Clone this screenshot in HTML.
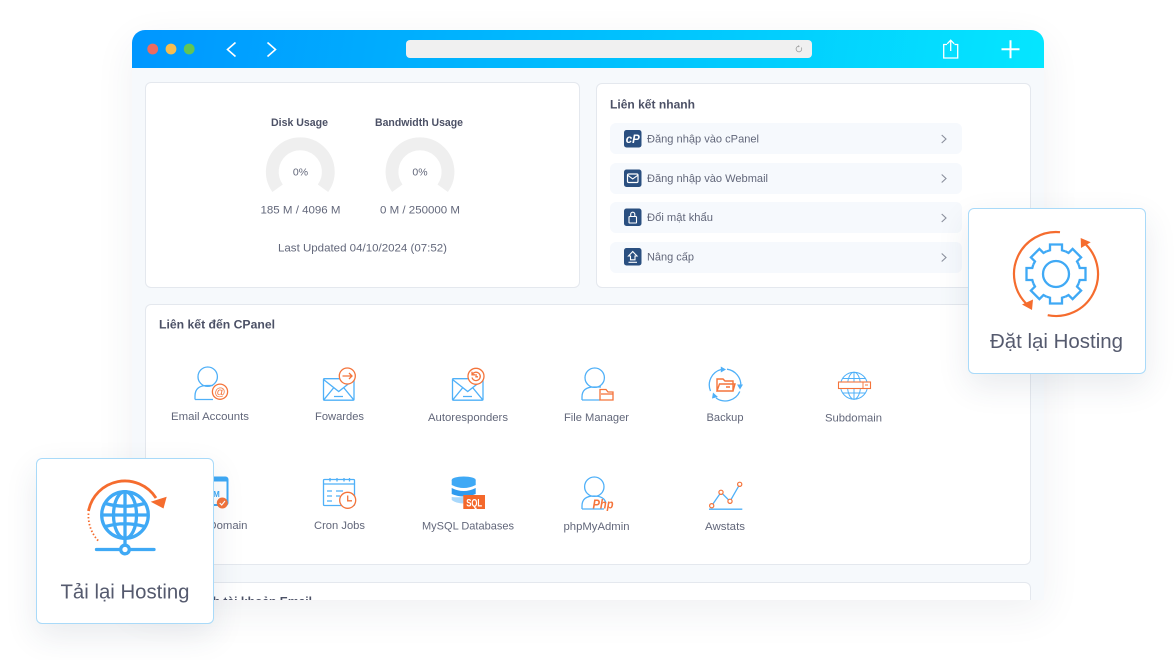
<!DOCTYPE html>
<html lang="vi">
<head>
<meta charset="utf-8">
<title>Hosting</title>
<style>
html,body{margin:0;padding:0;background:#fff;}
body{width:1176px;height:660px;position:relative;overflow:hidden;font-family:"Liberation Sans",sans-serif;}
.browser{position:absolute;left:132px;top:30px;width:912px;height:570px;background:#f6f9fc;border-radius:13px 13px 0 0;overflow:hidden;}
.shadow{position:absolute;left:132px;top:30px;width:912px;height:570px;border-radius:13px 13px 0 0;box-shadow:0 12px 40px rgba(40,60,90,.07);}
.head{position:absolute;left:0;top:0;width:912px;height:38px;background:linear-gradient(100deg,#0096ff 0%,#00befe 50%,#05e6ff 100%);}
.card{position:absolute;background:#fff;border:1px solid #e4e8ee;border-radius:6px;box-sizing:border-box;}
.row{position:absolute;left:478px;width:352px;height:31px;background:#f6f9fd;border-radius:6px;}
.float{position:absolute;width:178px;height:166px;background:#fff;border:1px solid #a9daf9;border-radius:6px;box-sizing:border-box;box-shadow:0 12px 32px rgba(40,60,90,.10);}
svg{position:absolute;left:0;top:0;overflow:visible;filter:blur(.3px);}
text{font-family:"Liberation Sans",sans-serif;fill:#555a6e;}
.b{font-weight:700;fill:#4c5166;font-size:12px;}
.s{font-size:11px;fill:#62677a;}
.l{fill:none;stroke:#4fb0f8;stroke-width:1.3;}
.o{fill:none;stroke:#f4743b;stroke-width:1.3;}
</style>
</head>
<body>
<div class="shadow"></div>
<div class="browser">
  <div class="head"></div>
  <div class="card" style="left:13px;top:52px;width:435px;height:206px;"></div>
  <div class="card" style="left:464px;top:53px;width:435px;height:205px;"></div>
  <div class="row" style="top:93px;"></div>
  <div class="row" style="top:133px;"></div>
  <div class="row" style="top:172px;"></div>
  <div class="row" style="top:212px;"></div>
  <div class="card" style="left:13px;top:274px;width:886px;height:261px;"></div>
  <div class="card" style="left:13px;top:552px;width:886px;height:60px;"></div>

  <svg width="1176" height="660" viewBox="0 0 1176 660" style="left:-132px;top:-30px;">
    <!-- window controls -->
    <circle cx="152.7" cy="49" r="5.4" fill="#ee6b60"/>
    <circle cx="171" cy="49" r="5.4" fill="#f6bd4f"/>
    <circle cx="189.2" cy="49" r="5.4" fill="#62c555"/>
    <path d="M235.5 42.5L227.5 49.5L235.5 56.5" fill="none" stroke="#fff" stroke-width="1.6"/>
    <path d="M267.5 42.5L275.5 49.5L267.5 56.5" fill="none" stroke="#fff" stroke-width="1.6"/>
    <rect x="406" y="40" width="406" height="18" rx="4" fill="#f0f0f0"/>
    <path d="M801.3 47.5A2.8 2.8 0 1 1 798.8 46.2" fill="none" stroke="#a0a0a0" stroke-width=".8"/>
    <path d="M798.3 45l1.5 1.2-1.5 1.2z" fill="#a0a0a0"/>
    <path d="M947 44.5H943.7V58H957.7V44.5H954.5M950.7 51V40.5M947.2 43.8L950.7 40.2L954.2 43.8" fill="none" stroke="#fff" stroke-width="1.3"/>
    <path d="M1001.5 49.3H1019.5M1010.5 40.3V58.3" stroke="#fff" stroke-width="2" fill="none"/>

    <!-- usage -->
    <text class="b" x="299.5" y="126" text-anchor="middle" textLength="57" lengthAdjust="spacingAndGlyphs" style="font-size:11px">Disk Usage</text>
    <text class="b" x="419" y="126" text-anchor="middle" textLength="88" lengthAdjust="spacingAndGlyphs" style="font-size:11px">Bandwidth Usage</text>
    <path d="M277.6 188.2A28 28 0 1 1 323 188.2" fill="none" stroke="#efefef" stroke-width="12.8"/>
    <path d="M397.3 188.2A28 28 0 1 1 442.7 188.2" fill="none" stroke="#efefef" stroke-width="12.8"/>
    <text class="s" x="300.5" y="175.5" text-anchor="middle" style="font-size:10.5px">0%</text>
    <text class="s" x="420" y="175.5" text-anchor="middle" style="font-size:10.5px">0%</text>
    <text class="s" x="300.5" y="213.5" text-anchor="middle" textLength="80" lengthAdjust="spacingAndGlyphs">185 M / 4096 M</text>
    <text class="s" x="420" y="213.5" text-anchor="middle" textLength="80" lengthAdjust="spacingAndGlyphs">0 M / 250000 M</text>
    <text class="s" x="362.5" y="251.5" text-anchor="middle" textLength="169" lengthAdjust="spacingAndGlyphs">Last Updated 04/10/2024 (07:52)</text>

    <!-- quick links -->
    <text class="b" x="610" y="108.5" textLength="85" lengthAdjust="spacingAndGlyphs">Liên kết nhanh</text>
    <rect x="624" y="130" width="17.5" height="17.5" rx="2.5" fill="#2a4f80"/>
    <rect x="624" y="169.5" width="17.5" height="17.5" rx="2.5" fill="#2a4f80"/>
    <rect x="624" y="208.5" width="17.5" height="17.5" rx="2.5" fill="#2a4f80"/>
    <rect x="624" y="248" width="17.5" height="17.5" rx="2.5" fill="#2a4f80"/>
    <text x="632.8" y="142.8" text-anchor="middle" textLength="14" lengthAdjust="spacingAndGlyphs" style="font-size:11.5px;font-weight:700;font-style:italic;fill:#fff">cP</text>
    <rect x="627.5" y="174" width="10.5" height="8.5" rx="1.2" fill="none" stroke="#fff" stroke-width="1.2"/>
    <path d="M627.8 175.3L632.7 179L637.7 175.3" fill="none" stroke="#fff" stroke-width="1.1"/>
    <rect x="629" y="216.5" width="7.5" height="6.5" rx=".8" fill="none" stroke="#fff" stroke-width="1.1"/>
    <path d="M630.7 216.5V214.2A2 2 0 0 1 634.8 214.2V216.5" fill="none" stroke="#fff" stroke-width="1.1"/>
    <path d="M632.7 251.5L637 256H635V259.8H630.5V256H628.5Z" fill="none" stroke="#fff" stroke-width="1.1"/>
    <path d="M628.5 262.3H637" stroke="#fff" stroke-width="1.1"/>
    <text class="s" x="647" y="142.5" textLength="112" lengthAdjust="spacingAndGlyphs">Đăng nhập vào cPanel</text>
    <text class="s" x="647" y="182" textLength="121" lengthAdjust="spacingAndGlyphs">Đăng nhập vào Webmail</text>
    <text class="s" x="647" y="221" textLength="66" lengthAdjust="spacingAndGlyphs">Đổi mật khẩu</text>
    <text class="s" x="647" y="260.5" textLength="47" lengthAdjust="spacingAndGlyphs">Nâng cấp</text>
    <g fill="none" stroke="#8a8f9c" stroke-width="1.1">
      <path d="M941.7 135L946 139L941.7 143"/>
      <path d="M941.7 174.5L946 178.5L941.7 182.5"/>
      <path d="M941.7 214L946 218L941.7 222"/>
      <path d="M941.7 253.5L946 257.5L941.7 261.5"/>
    </g>

    <!-- cPanel section -->
    <text class="b" x="159" y="328.5" textLength="116" lengthAdjust="spacingAndGlyphs">Liên kết đến CPanel</text>

    <!-- Email Accounts -->
    <circle class="l" cx="207.7" cy="376.7" r="9.7"/>
    <path class="l" d="M195 399.5V396Q195 385.5 207 385.5H213M195 399.5H213"/>
    <circle cx="220" cy="391.7" r="7.6" fill="#fff" stroke="#f4743b" stroke-width="1.3"/>
    <text x="220" y="395.5" text-anchor="middle" style="font-size:11px;fill:#f4743b">@</text>
    <text class="s" x="210" y="420" text-anchor="middle" textLength="78" lengthAdjust="spacingAndGlyphs">Email Accounts</text>

    <!-- Fowardes -->
    <rect class="l" x="323.5" y="378.7" width="30.5" height="21.5" rx="1"/>
    <path class="l" d="M323.5 379.5L338.7 391.5L354 379.5M323.8 399.8L333.5 388M353.7 399.8L344 388M334 396.5H343"/>
    <circle cx="347.3" cy="376" r="8" fill="#fff" stroke="#f4743b" stroke-width="1.3"/>
    <path class="o" d="M342.5 376H352M349 373L352 376L349 379"/>
    <text class="s" x="339.5" y="420" text-anchor="middle" textLength="49" lengthAdjust="spacingAndGlyphs">Fowardes</text>

    <!-- Autoresponders -->
    <rect class="l" x="452.5" y="378.7" width="30.5" height="21.5" rx="1"/>
    <path class="l" d="M452.5 379.5L467.7 391.5L483 379.5M452.8 399.8L462.5 388M482.7 399.8L473 388M463 396.5H472"/>
    <circle cx="476" cy="376.3" r="8" fill="#fff" stroke="#f4743b" stroke-width="1.3"/>
    <path class="o" d="M472.3 374.5A4.2 4.2 0 1 1 472 377.5M472 371.8V374.8H475M476 374V376.8H478"/>
    <text class="s" x="468" y="421" text-anchor="middle" textLength="80" lengthAdjust="spacingAndGlyphs">Autoresponders</text>

    <!-- File Manager -->
    <circle class="l" cx="594.7" cy="377.7" r="9.7"/>
    <path class="l" d="M582 400V397Q582 387 594 387H601M582 400H600"/>
    <path d="M600 400V389.5H606L608 392H613V400Z" fill="#fff" stroke="#f4743b" stroke-width="1.3"/>
    <path class="o" d="M601 394H613"/>
    <text class="s" x="596.5" y="421" text-anchor="middle" textLength="65" lengthAdjust="spacingAndGlyphs">File Manager</text>

    <!-- Backup -->
    <path class="l" d="M710.5 391A16 16 0 0 1 721 369.5M727 369.2A16 16 0 0 1 740.8 386M739.8 391.5A16 16 0 0 1 716 398"/>
    <path d="M720.8 366.5L726 369.5L720.8 372.5Z M737 384.5H743L740 389.5Z M713 392.5L712 398.5L718 397Z" fill="#4fb0f8"/>
    <path class="o" d="M717 391V379H723L725 381H733V391ZM717 391L719.5 384H735L733 391ZM726 387H730" style="stroke-width:1.4"/>
    <text class="s" x="725" y="421" text-anchor="middle" textLength="37" lengthAdjust="spacingAndGlyphs">Backup</text>

    <!-- Subdomain -->
    <circle class="l" cx="854" cy="385.7" r="13.5" style="stroke-width:1"/>
    <ellipse class="l" cx="854" cy="385.7" rx="6.5" ry="13.5" style="stroke-width:1"/>
    <path class="l" d="M854 372.2V399.2M842.5 378.5H865.5M842.5 393H865.5" style="stroke-width:1"/>
    <rect x="838.5" y="382" width="32" height="6.5" fill="#fff" stroke="#f4743b" stroke-width="1.1"/>
    <path class="o" d="M863 382V388.5M865 385H868" style="stroke-width:.9"/>
    <text class="s" x="853.5" y="421.5" text-anchor="middle" textLength="57" lengthAdjust="spacingAndGlyphs">Subdomain</text>

    <!-- Addon Domain -->
    <rect x="205" y="477.5" width="22.5" height="27.5" rx="2" fill="none" stroke="#3fa9f5" stroke-width="2"/>
    <rect x="205" y="477.5" width="22.5" height="4" fill="#3fa9f5"/>
    <text x="216.5" y="497" text-anchor="middle" style="font-size:8px;font-weight:700;fill:#3fa9f5">M</text>
    <circle cx="222.3" cy="503" r="5.5" fill="#f4743b"/>
    <path d="M219.7 503L221.7 505L225 501" fill="none" stroke="#fff" stroke-width="1.1"/>
    <text class="s" x="210" y="529" text-anchor="middle" textLength="75" lengthAdjust="spacingAndGlyphs">Addon Domain</text>

    <!-- Cron Jobs -->
    <rect class="l" x="323.5" y="479.5" width="31" height="26" rx="1"/>
    <path class="l" d="M323.5 484H354.5M330 478V481.5M337 478V481.5M344 478V481.5M349.5 478V481.5M327 491H332M336 491H343M327 496H332M336 496H340M327 501H332"/>
    <circle cx="347.7" cy="500.3" r="8" fill="#fff" stroke="#f4743b" stroke-width="1.3"/>
    <path class="o" d="M347.7 495.5V500.8H352"/>
    <text class="s" x="339.5" y="529" text-anchor="middle" textLength="51" lengthAdjust="spacingAndGlyphs">Cron Jobs</text>

    <!-- MySQL -->
    <path d="M451.7 480V485Q463.7 491 475.7 485V480Z" fill="#3fa9f5"/>
    <ellipse cx="463.7" cy="480" rx="12" ry="3.5" fill="#3fa9f5"/>
    <path d="M451.7 488V494Q463.7 499 475.7 494V488Q463.7 494 451.7 488Z" fill="#2f9bef"/>
    <path d="M451.7 497V500Q456 503.5 464 503.5V497Q457 497.5 451.7 497Z" fill="#a9d8fb"/>
    <rect x="463.3" y="495" width="21.7" height="14" fill="#f4682b"/>
    <text x="474.2" y="506.3" text-anchor="middle" textLength="16" lengthAdjust="spacingAndGlyphs" style="font-size:11px;font-weight:700;fill:#fff">SQL</text>
    <text class="s" x="468" y="529.5" text-anchor="middle" textLength="92" lengthAdjust="spacingAndGlyphs">MySQL Databases</text>

    <!-- phpMyAdmin -->
    <circle class="l" cx="594.3" cy="486.7" r="9.7"/>
    <path class="l" d="M582 509V506Q582 496 594 496Q604 496 606 503M582 509H604"/>
    <text x="592.5" y="508.5" textLength="21" lengthAdjust="spacingAndGlyphs" style="font-size:12.5px;font-weight:700;font-style:italic;fill:#f4743b">Php</text>
    <text class="s" x="596.5" y="530" text-anchor="middle" textLength="66" lengthAdjust="spacingAndGlyphs">phpMyAdmin</text>

    <!-- Awstats -->
    <path class="l" d="M709 509.2H742.3M711.7 505.7L721 492.3L730 501.3L739.7 484.3"/>
    <g fill="#fff" stroke="#f4743b" stroke-width="1.2">
      <circle cx="711.7" cy="505.7" r="2.1"/>
      <circle cx="721" cy="492.3" r="2.1"/>
      <circle cx="730" cy="501.3" r="2.1"/>
      <circle cx="739.7" cy="484.3" r="2.1"/>
    </g>
    <text class="s" x="725" y="530" text-anchor="middle" textLength="40" lengthAdjust="spacingAndGlyphs">Awstats</text>

    <text class="b" x="159" y="605.5" textLength="153" lengthAdjust="spacingAndGlyphs">Danh sách tài khoản Email</text>
  </svg>
</div>

<div class="float" style="left:968px;top:208px;"></div>
<div class="float" style="left:36px;top:458px;"></div>

<svg width="1176" height="660" viewBox="0 0 1176 660">
  <!-- gear -->
  <g transform="translate(1056 274)" fill="none" stroke="#3fa9f5" stroke-width="2.3">
    <circle r="13"/>
    <path d="M-9.4 -22.7L-6 -23.7V-29.5H6V-23.7L9.4 -22.7"/>
    <path transform="rotate(45)" d="M-9.4 -22.7L-6 -23.7V-29.5H6V-23.7L9.4 -22.7"/>
    <path transform="rotate(90)" d="M-9.4 -22.7L-6 -23.7V-29.5H6V-23.7L9.4 -22.7"/>
    <path transform="rotate(135)" d="M-9.4 -22.7L-6 -23.7V-29.5H6V-23.7L9.4 -22.7"/>
    <path transform="rotate(180)" d="M-9.4 -22.7L-6 -23.7V-29.5H6V-23.7L9.4 -22.7"/>
    <path transform="rotate(225)" d="M-9.4 -22.7L-6 -23.7V-29.5H6V-23.7L9.4 -22.7"/>
    <path transform="rotate(270)" d="M-9.4 -22.7L-6 -23.7V-29.5H6V-23.7L9.4 -22.7"/>
    <path transform="rotate(315)" d="M-9.4 -22.7L-6 -23.7V-29.5H6V-23.7L9.4 -22.7"/>
  </g>
  <path d="M1060 232.2A42 42 0 0 0 1027 304.4" fill="none" stroke="#f56c2e" stroke-width="2.2"/>
  <path d="M1032 310L1022 304.5L1033 299.5Z" fill="#f56c2e"/>
  <path d="M1047.7 315.2A42 42 0 0 0 1085.7 244.3" fill="none" stroke="#f56c2e" stroke-width="2.2"/>
  <path d="M1080.7 238L1081 248L1090.7 242.3Z" fill="#f56c2e"/>
  <text x="1056.5" y="348" text-anchor="middle" textLength="133" lengthAdjust="spacingAndGlyphs" style="font-size:20px;fill:#555a6e">Đặt lại Hosting</text>

  <!-- globe -->
  <g fill="none" stroke="#3fa9f5" stroke-width="3.3">
    <circle cx="125" cy="515" r="23.3"/>
    <ellipse cx="125" cy="515" rx="11.5" ry="23.3"/>
    <path d="M125 491.5V538.5M102 515H148M105.5 503.5Q125 509 144.5 503.5M105.5 526.5Q125 521 144.5 526.5"/>
    <path d="M125 539V544M96.5 549.5H154" stroke-linecap="round"/>
    <circle cx="125" cy="549.5" r="4.3" fill="#fff"/>
  </g>
  <path d="M88.5 511A37 37 0 0 1 156 498" fill="none" stroke="#f56c2e" stroke-width="2.8"/>
  <path d="M163.5 508.5L150.7 501.7L166.7 496.7Z" fill="#f56c2e"/>
  <path d="M88.5 513.5A36.5 36.5 0 0 0 98.5 541" fill="none" stroke="#f56c2e" stroke-width="1.8" stroke-dasharray="1.5 2"/>
  <text x="125" y="598.5" text-anchor="middle" textLength="129" lengthAdjust="spacingAndGlyphs" style="font-size:20px;fill:#555a6e">Tải lại Hosting</text>
</svg>
</body>
</html>
